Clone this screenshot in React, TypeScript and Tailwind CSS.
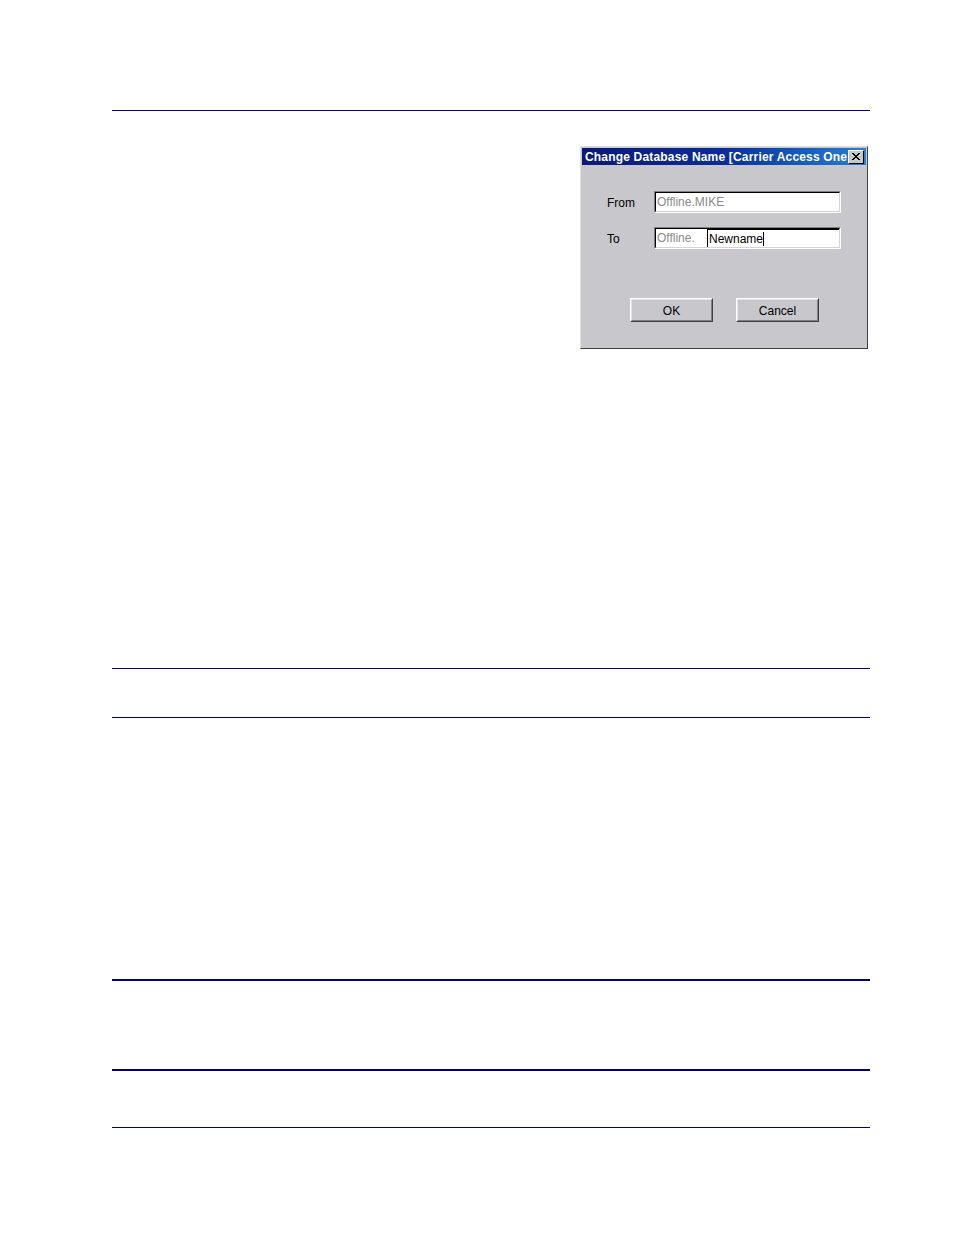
import React from "react";

function Rule({ thick = false }: { thick?: boolean }) {
  return <div className={thick ? "h-[2px] bg-[#000080]" : "h-px bg-[#000080]"} />;
}

function Win95Button({ label }: { label: string }) {
  return (
    <div className="w-[83px] h-[24px] border border-t-white border-l-white border-r-[#404040] border-b-[#404040]">
      <div className="w-full h-full flex items-center justify-center pt-[1px] border border-t-[#e4e4e4] border-l-[#e4e4e4] border-r-[#808080] border-b-[#808080] text-[12px] text-black">
        {label}
      </div>
    </div>
  );
}

function Field({ children }: { children: React.ReactNode }) {
  return (
    <div className="w-[187px] h-[22px] border border-t-[#808080] border-l-[#808080] border-r-white border-b-white">
      <div className="w-full h-full flex border border-t-black border-l-black border-r-[#d4d4d4] border-b-[#d4d4d4] bg-white">
        {children}
      </div>
    </div>
  );
}

function RenameDialog() {
  return (
    <div
      className="w-[288px] h-[203px] bg-[#c7c7cc] border border-t-[#e0e0e0] border-l-[#e0e0e0] border-r-[#404040] border-b-[#404040] p-px flex flex-col"
      style={{ fontFamily: '"Liberation Sans", Arial, sans-serif' }}
    >
      {/* Title bar */}
      <div className="h-[17px] flex items-center bg-gradient-to-r from-[#0a1a78] via-[#0c2c9a] to-[#2b7fd4] pl-[3px] pr-[2px]">
        <span className="flex-1 whitespace-nowrap text-white font-bold text-[12px] tracking-[0.18px] leading-none">
          Change Database Name [Carrier Access One
        </span>
        <div className="w-[16px] h-[14px] bg-[#c7c7cc] border border-t-white border-l-white border-r-black border-b-black flex items-center justify-center">
          <svg width="9" height="8" viewBox="0 0 9 8">
            <path d="M1 0 L8 7 M0 0 L7 7 M7 0 L0 7 M8 0 L1 7" stroke="black" strokeWidth="1" />
          </svg>
        </div>
      </div>

      {/* Body */}
      <div className="flex flex-col pl-[25px] pt-[26px]">
        <div className="flex items-center h-[22px]">
          <span className="w-[47px] pt-[2px] text-[12px] text-black">From</span>
          <Field>
            <span className="pl-[1px] text-[12px] leading-[19px] text-[#8a8a8a]">Offline.MIKE</span>
          </Field>
        </div>
        <div className="flex items-center h-[22px] mt-[14px]">
          <span className="w-[47px] pt-[2px] text-[12px] text-black">To</span>
          <Field>
            <span className="w-[51px] pl-[1px] text-[12px] leading-[19px] text-[#8a8a8a]">Offline.</span>
            <div className="flex-1 border-l border-t border-black flex items-center">
              <span className="pl-[1px] text-[12px] leading-[18px] text-black">Newname</span>
              <span className="w-px h-[14px] bg-black" />
            </div>
          </Field>
        </div>
        <div className="flex gap-[23px] pl-[23px] mt-[49px]">
          <Win95Button label="OK" />
          <Win95Button label="Cancel" />
        </div>
      </div>
    </div>
  );
}

export default function App() {
  return (
    <div className="w-[954px] h-[1235px] bg-white">
      <div className="ml-[112px] w-[758px] pt-[110px]">
        <Rule />
        <div className="h-[557px] flex justify-end items-start pt-[35px] pr-[2px]">
          <RenameDialog />
        </div>
        <Rule />
        <div className="h-[48px]" />
        <Rule />
        <div className="h-[261px]" />
        <Rule thick />
        <div className="h-[88px]" />
        <Rule thick />
        <div className="h-[56px]" />
        <Rule />
      </div>
    </div>
  );
}
